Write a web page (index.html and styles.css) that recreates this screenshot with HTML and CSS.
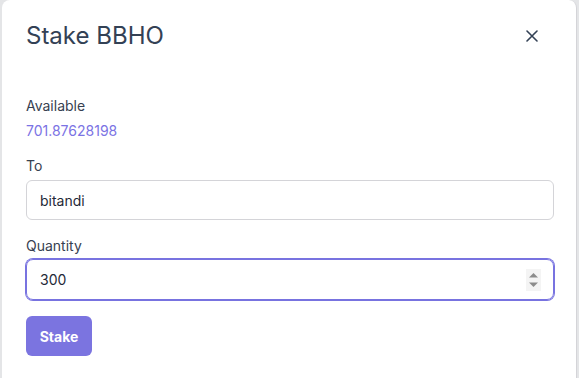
FILE: index.html
```html
<!DOCTYPE html>
<html lang="en">
<head>
<meta charset="utf-8">
<title>Stake BBHO</title>
<link rel="stylesheet" href="styles.css">
</head>
<body>
<div class="backdrop">
  <div class="modal">
    <div class="modal-header">
      <h2 class="modal-title">Stake BBHO</h2>
      <button class="close-btn" aria-label="Close">
        <svg width="12" height="12" viewBox="0 0 12 12"><path d="M1 1L11 11M11 1L1 11" stroke="#334155" stroke-width="1.6" stroke-linecap="round"/></svg>
      </button>
    </div>
    <div class="modal-body">
      <div class="label">Available</div>
      <div class="value">701.87628198</div>
      <div class="label label-to">To</div>
      <div class="input input-to">bitandi</div>
      <div class="label label-qty">Quantity</div>
      <div class="input input-focus">
        <span>300</span>
        <span class="spinner">
          <svg width="15" height="22" viewBox="0 0 15 22"><rect width="15" height="22" fill="#f4f4f4"/><path d="M3 8.5L7.5 4L12 8.5Z" fill="#8c8c8c"/><path d="M3 13.5L7.5 18L12 13.5Z" fill="#8c8c8c"/></svg>
        </span>
      </div>
      <button class="stake-btn">Stake</button>
    </div>
  </div>
</div>
</body>
</html>
```

FILE: styles.css
```css
* { box-sizing: border-box; }
html, body { margin: 0; padding: 0; }
body {
  background: #e4e5e7;
  font-family: Inter, "Noto Sans", sans-serif;
  overflow: hidden;
  height: 378px;
}
.backdrop {
  padding-left: 2px;
  width: 579px;
}
.modal {
  width: 575px;
  height: 390px;
  background: #ffffff;
  border-radius: 8px;
  border-right: 1px solid #d4d4d8;
}
.modal-header {
  height: 72px;
  display: flex;
  align-items: center;
  justify-content: space-between;
  padding: 0 32px 0 24px;
}
.modal-title {
  margin: 0;
  font-size: 24px;
  font-weight: 400;
  color: #334155;
  line-height: 32px;
}
.close-btn {
  background: none;
  border: none;
  width: 24px;
  height: 24px;
  padding: 0;
  display: flex;
  align-items: center;
  justify-content: center;
}
.modal-body {
  padding: 24px 24px 0 24px;
  display: flex;
  flex-direction: column;
  align-items: flex-start;
}
.label {
  font-size: 14px;
  line-height: 20px;
  color: #374151;
}
.label-to { margin-top: 15px; }
.label-qty { margin-top: 16px; }
.value {
  font-size: 14px;
  line-height: 20px;
  color: #7b73e4;
  margin-top: 5px;
}
.input {
  width: 528px;
  height: 40px;
  border: 1px solid #d4d4d8;
  border-radius: 6px;
  padding: 0 13px;
  display: flex;
  align-items: center;
  justify-content: space-between;
  font-size: 14px;
  color: #1f2937;
}
.input-to { margin-top: 4px; }
.input-focus {
  height: 41px;
  border: 1px solid #7873e0;
  box-shadow: 0 0 0 1px #7873e0;
  border-radius: 7px;
  margin-top: 3px;
  padding-right: 12px;
}
.spinner { display: flex; }
.stake-btn {
  margin-top: 16px;
  width: 66px;
  height: 40px;
  background: #7b74e0;
  border: none;
  border-radius: 6px;
  color: #ffffff;
  font-family: Inter, "Noto Sans", sans-serif;
  font-size: 14px;
  font-weight: 700;
  padding: 0;
}
```
